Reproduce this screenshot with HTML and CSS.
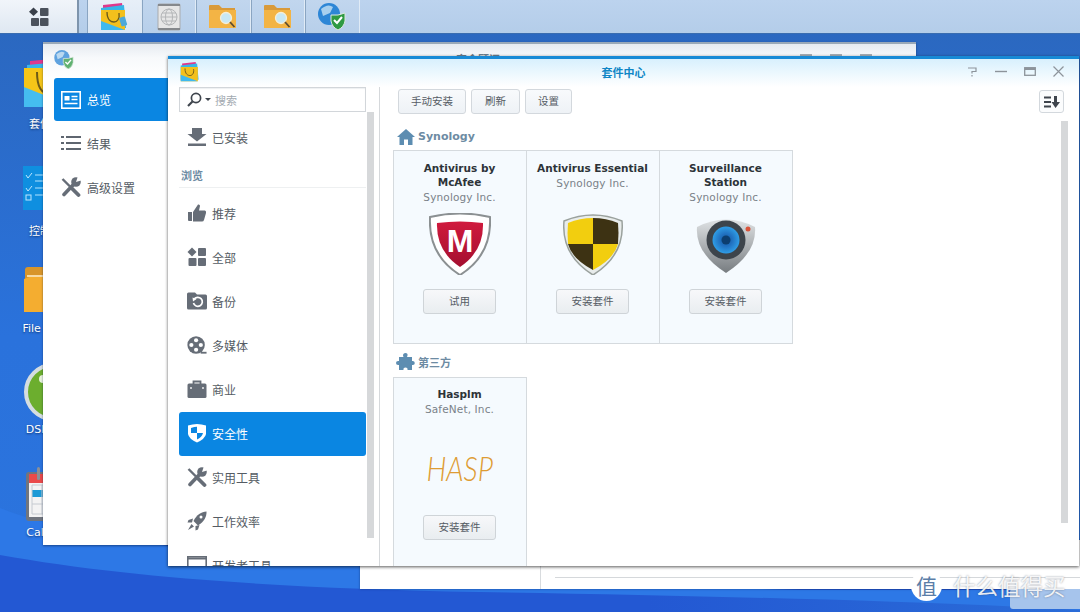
FILE: index.html
```html
<!DOCTYPE html>
<html lang="zh">
<head>
<meta charset="utf-8">
<title>套件中心</title>
<link rel="stylesheet" href="styles.css">
</head>
<body>
<div class="desktop">
  <svg class="wallpaper" viewBox="0 0 1080 612" preserveAspectRatio="none">
    <defs>
      <linearGradient id="wp" x1="0" y1="0" x2="0" y2="1"><stop offset="0" stop-color="#2b67bd"/><stop offset=".55" stop-color="#2a72dc"/><stop offset="1" stop-color="#2b74de"/></linearGradient>
      <linearGradient id="wl" x1="0" y1="0" x2="1" y2="0"><stop offset="0" stop-color="#2358d3"/><stop offset=".6" stop-color="#2358d3"/><stop offset="1" stop-color="#2a6cd8"/></linearGradient>
    </defs>
    <rect width="1080" height="612" fill="url(#wp)"/>
    <path d="M150 540H1080V612H150Z" fill="#1f52c6"/>
    <path d="M0 508C70 535 150 548 300 556C450 568 600 585 800 590L1080 590V612H0Z" fill="#2d78e6"/>
    <path d="M0 555C130 578 280 588 480 592C700 596 900 600 1080 610V612H0Z" fill="url(#wl)"/>
  </svg>

  <div class="desk-icon desk-pkg">
    <svg width="58" height="54" viewBox="0 0 58 54"><path d="M6 4L50 0V40H6Z" fill="#e0388c"/><path d="M3 8L48 4V40H3Z" fill="#39b4e8"/><path d="M0 11H50V50H0Z" fill="#f5c518"/><path d="M0 30L50 50H0Z" fill="#45bdf0"/><path d="M13 15C13 32 19 37 26 37" stroke="#6d5a17" stroke-width="2" fill="none"/></svg>
    <span class="desk-label">套件中心</span>
  </div>
  <div class="desk-icon desk-ctl">
    <svg width="58" height="54" viewBox="0 0 58 54"><rect width="58" height="44" y="3" fill="#0f8fe0"/><path d="M3 12l2 3 4-5M3 25l2 3 4-5" stroke="#bfe6ff" fill="none"/><path d="M12 12H50M12 18H50M12 25H50M12 32H50" stroke="#7cc8f4" stroke-width="1.5"/><rect x="3" y="32" width="5" height="5" fill="none" stroke="#bfe6ff"/></svg>
    <span class="desk-label">控制面板</span>
  </div>
  <div class="desk-icon desk-file">
    <svg width="58" height="48" viewBox="0 0 58 48"><path d="M1 3Q1 0 4 0H24L28 3H54V44H1Z" fill="#d8952a"/><path d="M0 12L8 9H58V45H0Z" fill="#f4ad30"/><path d="M3 9H50" stroke="#f7dba6" stroke-width="2"/></svg>
    <span class="desk-label">File Station</span>
  </div>
  <div class="desk-icon desk-dsm">
    <svg width="60" height="58" viewBox="0 0 60 58"><circle cx="30" cy="29" r="27" fill="#6cae2e" stroke="#d5dde0" stroke-width="4"/><circle cx="20" cy="16" r="4" fill="#e8f3dc"/></svg>
    <span class="desk-label">DSM 说明</span>
  </div>
  <div class="desk-icon desk-cal">
    <svg width="58" height="54" viewBox="0 0 58 54"><rect x="1" y="5" width="56" height="49" rx="3" fill="#70757e"/><rect x="4" y="7" width="50" height="43" fill="#f3f3f3"/><rect x="4" y="7" width="50" height="9" fill="#ea4a4a"/><rect x="7" y="23" width="42" height="7" fill="#1c9ad6"/><path d="M7 18H50V47H7ZM7 37H50M17 18V47M28 18V47" fill="none" stroke="#c5cad0"/><rect x="12" y="0" width="3" height="13" rx="1.5" fill="#8b8f96"/></svg>
    <span class="desk-label">Calendar</span>
  </div>

  <div class="taskbar">
    <div class="start">
      <svg width="20" height="20" viewBox="0 0 20 19"><path d="M4.5 0L9 4.2L4.5 8.4L0 4.2Z" fill="#39404a"/><rect x="11" y="0.500" width="8.500" height="8" rx="1" fill="#4b525c"/><rect x="2" y="10.500" width="8" height="8" rx="1" fill="#4b525c"/><rect x="11" y="10.500" width="8.500" height="8" rx="1" fill="#4b525c"/></svg>
    </div>
    <div class="tab tab-active">
      <svg width="28" height="28" viewBox="0 0 28 28"><path d="M3 2L22 0L25 24H3Z" fill="#e0388c"/><path d="M1 5L24 2L26 25H1Z" fill="#37b6e8"/><path d="M1 7H25V27H1Z" fill="#f3c01c"/><path d="M1 18L25 27H1Z" fill="#3fb9ee"/><path d="M7 9C7 17 11 19 14 19C17 19 20 16 19 10" stroke="#6b5a1a" stroke-width="1.300" fill="none"/><rect x="20" y="14" width="6" height="9" rx="1" fill="#4da9da" transform="rotate(-18 23 18)"/></svg>
    </div>
    <div class="tab">
      <svg width="24" height="28" viewBox="0 0 24 28"><rect x="1" y="1" width="22" height="26" rx="1" fill="#e6e6e6" stroke="#a9abae"/><rect x="1" y="1" width="22" height="2" fill="#85888c"/><rect x="1" y="25" width="22" height="2" fill="#85888c"/><g fill="none" stroke="#b4b6b8"><circle cx="12" cy="14" r="8"/><ellipse cx="12" cy="14" rx="3.500" ry="8"/><path d="M4 14H20M5 10H19M5 18H19"/></g></svg>
    </div>
    <div class="tab">
      <svg width="30" height="26" viewBox="0 0 30 26"><use href="#folder-search"/></svg>
    </div>
    <div class="tab">
      <svg width="30" height="26" viewBox="0 0 30 26"><use href="#folder-search"/></svg>
    </div>
    <div class="tab">
      <svg width="28" height="27" viewBox="0 0 28 27"><use href="#advisor"/></svg>
    </div>
  </div>

  <svg class="defs" width="0" height="0">
    <defs>
      <symbol id="folder-search" viewBox="0 0 30 26"><path d="M1 2Q1 1 2 1H11L14 4H27V23H1Z" fill="#d99a3a"/><path d="M1 6H28V24H1Z" fill="#f3b445"/><circle cx="18" cy="14" r="5.500" fill="#c8e8f5" stroke="#f6efd8" stroke-width="1.300"/><path d="M22 18L26.500 23" stroke="#5d4c2e" stroke-width="1.800"/></symbol>
      <symbol id="advisor" viewBox="0 0 28 27"><circle cx="11" cy="11" r="11" fill="#2d86d6"/><path d="M3 6Q10 0 15 4L12 10L5 13ZM14 14L19 12L16 20Z" fill="#a7cfee"/><path d="M13 12Q20 13 27 10V18Q26 24 20 27Q14 24 13 18Z" fill="#2f9a43" stroke="#dbe7dd"/><path d="M16 17L19 20L24 14" stroke="#fff" stroke-width="2" fill="none"/></symbol>
      <symbol id="tools" viewBox="0 0 20 20"><path d="M3 17.500L12.500 7.500" stroke="#666d77" stroke-width="3.600" stroke-linecap="round"/><circle cx="15" cy="5" r="4.800" fill="#666d77"/><path d="M15 5L17 -1L22 3Z" fill="#fff"/><path d="M1.500 2L9 9.500" stroke="#666d77" stroke-width="2.400"/><path d="M11 11.500L17.500 18" stroke="#666d77" stroke-width="3.800" stroke-linecap="round"/></symbol>
    </defs>
  </svg>

  <div class="win win-under">
    <div class="under-lines"><span class="under-left"></span><span class="under-rule"></span></div>
  </div>
  <div class="under-panel"></div>

  <div class="win win-back">
    <div class="back-title">
      <svg class="back-app" width="20" height="19" viewBox="0 0 28 27"><use href="#advisor"/></svg>
      <span class="back-name">安全顾问</span>
      <span class="back-ctl"><i></i><i></i><i></i></span>
    </div>
    <div class="back-nav">
      <div class="back-item back-sel">
        <svg width="20" height="18" viewBox="0 0 20 18"><rect x="0.800" y="0.800" width="18.400" height="16.400" fill="none" stroke="#fff" stroke-width="1.600"/><rect x="3.500" y="5" width="5" height="4.500" fill="#fff"/><path d="M10.500 5.500H16.500M10.500 8.500H16.500M3.500 12.500H16.500" stroke="#fff" stroke-width="1.400"/></svg>
        <span>总览</span>
      </div>
      <div class="back-item">
        <svg width="20" height="16" viewBox="0 0 20 16"><path d="M0 2H3M5 2H20M0 8H3M5 8H20M0 14H3M5 14H20" stroke="#5f6670" stroke-width="2.200"/></svg>
        <span>结果</span>
      </div>
      <div class="back-item">
        <svg width="20" height="20" viewBox="0 0 20 20"><use href="#tools"/></svg>
        <span>高级设置</span>
      </div>
    </div>
  </div>

  <div class="win win-front">
    <header class="title-bar">
      <svg class="title-app" width="20" height="20" viewBox="0 0 28 28"><path d="M3 2L22 0L25 24H3Z" fill="#e0388c"/><path d="M1 5L24 2L26 25H1Z" fill="#37b6e8"/><path d="M1 7H25V27H1Z" fill="#f3c01c"/><path d="M1 18L25 27H1Z" fill="#3fb9ee"/><path d="M7 9C7 17 11 19 14 19C17 19 20 16 19 10" stroke="#6b5a1a" stroke-width="1.300" fill="none"/></svg>
      <h1 class="title-text">套件中心</h1>
      <div class="title-ctl">
        <svg width="11" height="11" viewBox="0 0 11 11"><path d="M1 2H9V5.500H5V7.500M5 9V10.500" fill="none" stroke="#8d949b" stroke-width="1.200"/></svg>
        <svg width="12" height="11" viewBox="0 0 12 11"><path d="M0 5.500H12" stroke="#8d949b" stroke-width="1.400"/></svg>
        <svg width="12" height="11" viewBox="0 0 12 11"><rect x="0.700" y="1.700" width="10.600" height="7.600" fill="none" stroke="#8d949b" stroke-width="1.300"/><path d="M1 3H11" stroke="#8d949b" stroke-width="2"/></svg>
        <svg width="11" height="11" viewBox="0 0 11 11"><path d="M.5.500L10.500 10.500M10.500.500L.5 10.500" stroke="#8d949b" stroke-width="1.200"/></svg>
      </div>
    </header>
    <div class="front-body">
      <aside class="sidebar">
        <div class="search">
          <svg width="15" height="15" viewBox="0 0 15 15"><circle cx="9" cy="6" r="4.600" fill="none" stroke="#3f454d" stroke-width="1.700"/><path d="M5.500 9.500L1 14" stroke="#3f454d" stroke-width="2.200"/></svg>
          <span class="caret"></span>
          <span class="search-text">搜索</span>
        </div>
        <div class="side-scroll"></div>
        <nav class="side-list">
          <a class="side-item">
            <svg width="20" height="20" viewBox="0 0 20 20"><path d="M5 1H15V7H19.500L10 14.500L.5 7H5ZM1 16.500H19V19H1Z" fill="#666d77"/></svg>
            <span>已安装</span>
          </a>
          <div class="side-head">浏览</div>
          <a class="side-item">
            <svg width="20" height="20" viewBox="0 0 20 20"><path d="M1 9H5V18H2Q1 18 1 17ZM6 9L11 1.500Q13 1 13 3L12 7.500H18Q19.500 8 19 10L17 17Q16.500 18.500 15 18.500H6Z" fill="#666d77"/></svg>
            <span>推荐</span>
          </a>
          <a class="side-item">
            <svg width="20" height="20" viewBox="0 0 20 20"><path d="M5 0.500L9.500 5L5 9.500L.5 5Z" fill="#666d77"/><rect x="11" y="1" width="8" height="8" rx="1" fill="#666d77"/><rect x="1.500" y="11" width="8" height="8" rx="1" fill="#666d77"/><rect x="11" y="11" width="8" height="8" rx="1" fill="#666d77"/></svg>
            <span>全部</span>
          </a>
          <a class="side-item">
            <svg width="20" height="20" viewBox="0 0 20 20"><path d="M0 3Q0 1.500 1.500 1.500H8L10 3.500H18.500Q20 3.500 20 5V17Q20 18.500 18.500 18.500H1.500Q0 18.500 0 17Z" fill="#666d77"/><path d="M7 8.500A4.500 4.500 0 1 1 6.500 12" fill="none" stroke="#fff" stroke-width="1.700"/><path d="M5.500 6.500L9.500 8L6 10.500Z" fill="#fff"/></svg>
            <span>备份</span>
          </a>
          <a class="side-item">
            <svg width="22" height="20" viewBox="0 0 22 20"><circle cx="10" cy="10" r="9.600" fill="#666d77"/><g fill="#fff"><circle cx="10" cy="4.800" r="2.300"/><circle cx="10" cy="15.200" r="2.300"/><circle cx="4.800" cy="10" r="2.300"/><circle cx="15.200" cy="10" r="2.300"/></g><path d="M15 18.500H21.500" stroke="#666d77" stroke-width="2"/></svg>
            <span>多媒体</span>
          </a>
          <a class="side-item">
            <svg width="20" height="20" viewBox="0 0 20 20"><path d="M6.500 5V2.500H13.500V5" fill="none" stroke="#666d77" stroke-width="1.800"/><rect x="0.500" y="4.500" width="19" height="14.500" rx="1.500" fill="#666d77"/><path d="M4 10V8M16 10V8" stroke="#fff" stroke-width="1.300"/></svg>
            <span>商业</span>
          </a>
          <a class="side-item side-sel">
            <svg width="20" height="20" viewBox="0 0 20 20"><path d="M1 2.500Q10 -0.500 19 2.500V11Q18 16 10 19.500Q2 16 1 11Z" fill="#fff"/><path d="M4 5Q7.500 3.800 10 3.800V10H4ZM10 10H16Q15 14 10 16.500Z" fill="#0a86e2"/></svg>
            <span>安全性</span>
          </a>
          <a class="side-item">
            <svg width="20" height="20" viewBox="0 0 20 20"><use href="#tools"/></svg>
            <span>实用工具</span>
          </a>
          <a class="side-item">
            <svg width="20" height="20" viewBox="0 0 20 20"><path d="M19.500 .5C20 5 17 11 11 14.500L6.500 10C9.500 4 14.500 .5 19.500 .5Z" fill="#666d77"/><path d="M6 7.500L1.500 9L.5 11.500H5ZM12.500 14L11 18.500L8.500 19.500V15ZM4.500 13L7 15.500L1 19Z" fill="#666d77"/><circle cx="14" cy="6" r="1.500" fill="#fff"/></svg>
            <span>工作效率</span>
          </a>
          <a class="side-item">
            <svg width="20" height="20" viewBox="0 0 20 20"><rect x=".8" y="1.800" width="18.400" height="16.400" fill="none" stroke="#666d77" stroke-width="1.600"/><path d="M1 3.500H19" stroke="#666d77" stroke-width="2"/></svg>
            <span>开发者工具</span>
          </a>
        </nav>
      </aside>

      <main class="content">
        <div class="toolbar">
          <button class="tbtn">手动安装</button>
          <button class="tbtn tbtn-mid">刷新</button>
          <button class="tbtn">设置</button>
          <button class="tbtn sort">
            <svg width="16" height="12" viewBox="0 0 16 12"><path d="M0 1.500H7M0 6H7M0 10.500H7" stroke="#3f454d" stroke-width="2"/><path d="M10 0H13V6H16L11.500 12L7.500 6H10Z" fill="#3f454d"/></svg>
          </button>
        </div>
        <h2 class="sec-head">
          <svg width="18" height="16" viewBox="0 0 18 16"><path d="M9 0L18 8H15.500V16H11V10.500H7V16H2.500V8H0Z" fill="#5d8db1"/></svg>
          <span class="sec-latin">Synology</span>
        </h2>
        <div class="cards">
          <article class="card">
            <h3>Antivirus by McAfee</h3>
            <p>Synology Inc.</p>
            <div class="art">
              <svg width="62" height="62" viewBox="0 0 62 62"><defs><linearGradient id="red" x1="0" y1="0" x2="0" y2="1"><stop offset="0" stop-color="#d01a3d"/><stop offset="1" stop-color="#a40f30"/></linearGradient></defs><path d="M1 4Q31 -3 61 4Q63 42 31 62Q-1 42 1 4Z" fill="#fff" stroke="#8b9092" stroke-width="2"/><path d="M8 10Q31 7 54 10Q55 38 31 54Q7 38 8 10Z" fill="url(#red)"/><text x="31" y="39" class="m-letter">M</text></svg>
            </div>
            <button class="cbtn">试用</button>
          </article>
          <article class="card">
            <h3>Antivirus Essential</h3>
            <p>Synology Inc.</p>
            <div class="art art-short">
              <svg width="60" height="62" viewBox="0 0 60 62"><path d="M1 8Q30 -4 59 8Q62 42 30 62Q-2 42 1 8Z" fill="#e8eceb" stroke="#9aa19d" stroke-width="1.500"/><path d="M5 10Q17 5 30 5V31H5Q4 20 5 10Z" fill="#f2ce0f"/><path d="M30 5Q43 5 55 10Q56 20 55 31H30Z" fill="#3d3213"/><path d="M5 31H30V57Q9 46 5 31Z" fill="#3d3213"/><path d="M30 31H55Q51 46 30 57Z" fill="#f2ce0f"/></svg>
            </div>
            <button class="cbtn">安装套件</button>
          </article>
          <article class="card">
            <h3>Surveillance Station</h3>
            <p>Synology Inc.</p>
            <div class="art">
              <svg width="60" height="58" viewBox="0 0 60 58"><defs><linearGradient id="cam" x1="0" y1="0" x2="0" y2="1"><stop offset="0" stop-color="#dfe2e4"/><stop offset="1" stop-color="#777c80"/></linearGradient><radialGradient id="lens"><stop offset="0" stop-color="#0d5a9c"/><stop offset=".45" stop-color="#2170c0"/><stop offset="1" stop-color="#2f9de6"/></radialGradient></defs><path d="M1 12Q30 -3 59 12Q61 38 30 58Q-1 38 1 12Z" fill="url(#cam)"/><circle cx="30" cy="25" r="19.500" fill="#3d444b"/><circle cx="30" cy="25" r="13.500" fill="url(#lens)"/><circle cx="30" cy="25" r="4.500" fill="#0c3e70"/><circle cx="52" cy="14" r="2.500" fill="#d9533a"/></svg>
            </div>
            <button class="cbtn">安装套件</button>
          </article>
        </div>
        <h2 class="sec-head sec-third">
          <svg width="19" height="18" viewBox="0 0 19 18"><path d="M7 2.500Q7 0 9.500 0Q12 0 11.500 2.500L11 4H16V8Q18.500 7.500 18.800 10Q18.800 12.500 16 12V17H11.500Q12 14.500 9.500 14.500Q7 14.500 7.500 17H3V12Q0 12.500 0 10Q0 7.500 3 8V4H7.500Z" fill="#5d8db1"/></svg>
          <span>第三方</span>
        </h2>
        <div class="cards cards-third">
          <article class="card">
            <h3>Hasplm</h3>
            <p>SafeNet, Inc.</p>
            <div class="hasp">HASP</div>
            <button class="cbtn">安装套件</button>
          </article>
        </div>
        <div class="main-scroll"></div>
      </main>
    </div>
  </div>

  <div class="watermark">
    <span class="wm-badge">值</span>
    <span class="wm-text">什么值得买</span>
  </div>
</div>
</body>
</html>
```

FILE: styles.css
```css
* { box-sizing: border-box; }
html, body { margin: 0; padding: 0; }
body { font-family: "Noto Sans CJK SC", "Noto Sans", sans-serif; }
.desktop { position: relative; width: 1080px; height: 612px; overflow: hidden; background: #2a70d8; }
.wallpaper { position: absolute; inset: 0; width: 1080px; height: 612px; }
.defs { position: absolute; }

/* desktop icons: free canvas */
.desk-icon { position: absolute; left: 13px; width: 80px; display: flex; flex-direction: column; align-items: center; }
.desk-pkg { top: 57px; left: 11px; }
.desk-ctl { top: 163px; left: 11px; }
.desk-pkg svg { margin-left: 4px; }
.desk-ctl svg { margin-left: 2px; }
.desk-file { top: 267px; }
.desk-dsm { top: 363px; left: 11px; }
.desk-dsm svg { margin-left: 4px; }
.desk-cal { top: 467px; left: 11px; }
.desk-cal svg { margin-left: 5px; }
.desk-label { color: #fff; font-size: 11px; line-height: 14px; margin-top: 7px; text-shadow: 0 1px 2px rgba(0,30,80,.7); font-family: "DejaVu Sans", "Noto Sans CJK SC", sans-serif; white-space: nowrap; }
.desk-ctl .desk-label { margin-top: 8px; }
.desk-file .desk-label { margin-top: 7px; }
.desk-dsm .desk-label { margin-top: 2px; }
.desk-cal .desk-label { margin-top: 5px; }

/* taskbar */
.taskbar { position: absolute; left: 0; top: 0; width: 1080px; height: 34px; display: flex; background: linear-gradient(#bcd3ee, #b4cde9); border-bottom: 1px solid #3a6db0; }
.start { width: 79px; height: 33px; display: flex; align-items: center; justify-content: center; background: linear-gradient(#f1f5fa, #dfe8f2); border-right: 2px solid #7e94ac; margin-right: 8px; }
.tab { width: 54.500px; height: 33px; display: flex; align-items: center; justify-content: center; border-left: 1px solid #8aa5c2; border-right: 1px solid #e0ebf6; background: linear-gradient(#c1d6ee, #b7cfea); }
.tab-active { background: linear-gradient(#e7eff8, #dbe7f4); }

/* windows: free canvas */
.win { position: absolute; background: #fff; }
.win-under { left: 360px; top: 540px; width: 720px; height: 49px; box-shadow: 0 0 2px rgba(0,20,60,.5); }
.under-lines { height: 100%; display: flex; align-items: flex-end; padding: 0 0 11px 180px; }
.under-left { width: 1px; height: 49px; margin-bottom: -11px; background: #d8dbde; }
.under-rule { flex: 1; height: 1px; margin-left: 14px; background: #d5d8db; }
.under-panel { position: absolute; left: 1010px; top: 589px; width: 70px; height: 20px; background: #a6c4ec; border-radius: 3px 0 0 3px; }

.win-back { left: 43px; top: 42px; width: 873px; height: 503px; border-top: 2px solid #9aa9b8; box-shadow: 0 1px 2px rgba(0,20,60,.5); }
.back-title { position: relative; height: 34px; background: linear-gradient(#e6ebf1, #f7f9fb 40%, #fff); }
.back-app { position: absolute; left: 11px; top: 6px; opacity: .75; }
.back-name { position: absolute; left: 413px; top: 8px; width: 48px; font-size: 11px; font-weight: 700; line-height: 15px; color: #6b7d8c; white-space: nowrap; }
.back-ctl { position: absolute; left: 757px; top: 10px; display: flex; gap: 18px; }
.back-ctl i { width: 12px; height: 3px; background: #a5adb4; }
.back-nav { padding: 0 0 0 11px; width: 125px; }
.back-item { height: 44px; display: flex; align-items: center; gap: 6px; padding: 0 0 2px 7px; font-size: 12px; color: #555c64; }
.back-sel { height: 43px; margin-bottom: 1px; padding-bottom: 0; background: #0a86e2; color: #fff; border-radius: 3px 0 0 3px; }

.win-front { left: 168px; top: 56px; width: 911px; height: 510px; border-top: 3px solid #178ad6; box-shadow: 0 1px 3px rgba(0,0,0,.65); overflow: hidden; display: flex; flex-direction: column; }
.title-bar { position: relative; flex: none; height: 28px; display: flex; align-items: center; justify-content: center; padding-bottom: 2px; background: linear-gradient(#d8f0fd, #fff); }
.title-app { position: absolute; left: 12px; top: 3px; }
.title-text { margin: 0; font-size: 11px; line-height: 16px; font-weight: 700; color: #0f86c6; }
.title-ctl { position: absolute; right: 15px; top: 7px; display: flex; gap: 17px; align-items: center; }
.front-body { flex: 1; min-height: 0; display: flex; }

/* sidebar */
.sidebar { position: relative; flex: none; width: 212px; height: 100%; border-right: 1px solid #d5d8db; padding: 0 13px 0 11px; }
.search { height: 25px; display: flex; align-items: center; padding-left: 7px; border: 1px solid #d2d6da; box-shadow: inset 0 1px 1px #eef0f2; }
.caret { width: 0; height: 0; margin: 0 4px 0 3px; border: 3px solid transparent; border-top: 3px solid #3f454d; border-bottom: 0; }
.search-text { font-size: 11px; color: #a3aab1; }
.side-scroll { position: absolute; left: 199px; top: 25px; width: 7px; height: 426px; background: #d6d8da; }
.side-list { display: flex; flex-direction: column; padding-top: 4px; }
.side-item { flex: none; height: 44px; display: flex; align-items: center; gap: 5px; padding: 0 0 2px 8px; font-size: 12px; color: #555c64; border-radius: 3px; }
.side-item svg { flex: none; width: 20px; }
.side-sel { background: #0a86e2; color: #fff; }
.side-head { flex: none; height: 28px; margin-bottom: 4px; padding: 8px 0 0 2px; font-size: 11px; line-height: 15px; font-weight: 700; color: #6d8ba3; border-bottom: 1px solid #eef0f1; }

/* content */
.content { position: relative; flex: 1; min-width: 0; padding: 2px 0 0 13px; }
.toolbar { display: flex; gap: 5px; height: 25px; margin-left: 5px; }
.tbtn { height: 25px; padding: 0 12px; font: 10.500px/1 "Noto Sans CJK SC", sans-serif; color: #555c64; background: linear-gradient(#f8fafc, #eef2f6); border: 1px solid #d3d8dd; border-radius: 3px; }
.tbtn-mid { padding: 0 13px; }
.sort { position: absolute; left: 659px; top: 3px; width: 25px; height: 23px; padding: 0; display: flex; align-items: center; justify-content: center; background: #fbfcfd; }
.sec-head { display: flex; align-items: center; gap: 3px; height: 18px; margin: 14px 0 4px 4px; font-size: 11px; line-height: 18px; font-weight: 700; color: #6d8ba3; }
.sec-latin { font-family: "DejaVu Sans", sans-serif; font-size: 11px; }
.sec-third { margin: 9px 0 6px 3px; }
.cards { display: flex; margin-left: -.5px; }
.card { flex: none; width: 134px; height: 194px; margin-right: -1px; padding: 10px 8px 0; display: flex; flex-direction: column; align-items: center; text-align: center; background: #f5fafe; border: 1px solid #d5dade; }
.card h3 { margin: 0; font: 700 10.500px/14px "DejaVu Sans", sans-serif; color: #2d3338; width: 116px; }
.card p { margin: 1px 0 0; font: 10.500px/15px "DejaVu Sans", sans-serif; letter-spacing: .15px; color: #7a8188; white-space: nowrap; }
.art { height: 62px; margin-top: 8px; display: flex; align-items: center; justify-content: center; }
.art-short { margin-top: 22px; }
.cbtn { position: relative; width: 73px; height: 25px; margin-top: 14px; padding: 0; font: 10.500px/1 "Noto Sans CJK SC", sans-serif; color: #555c64; background: linear-gradient(#f7f8fa, #e9edf0); border: 1px solid #cfd4d8; border-radius: 3px; }
.cards-third .card { height: 194px; padding-top: 9px; }
.hasp { height: 62px; margin-top: 20px; font: italic 300 33px/62px Lato, sans-serif; color: #de9c34; transform: scaleX(.86); }
.cards-third .cbtn { margin-top: 16px; }
.m-letter { font: 700 32px "Liberation Sans", sans-serif; fill: #fff; text-anchor: middle; }
.main-scroll { position: absolute; left: 681px; top: 34px; width: 7px; height: 402px; background: #d6d8da; }

/* watermark */
.watermark { position: absolute; left: 911px; top: 570px; display: flex; align-items: center; gap: 11px; height: 31px; }
.wm-badge { width: 31px; height: 31px; border-radius: 50%; background: #fff; color: #5b7ea8; font-size: 21px; line-height: 30px; text-align: center; }
.wm-text { font-size: 22.500px; line-height: 31px; color: rgba(255,255,255,.9); text-shadow: 0 0 2px rgba(60,70,90,.6); white-space: nowrap; }
```
